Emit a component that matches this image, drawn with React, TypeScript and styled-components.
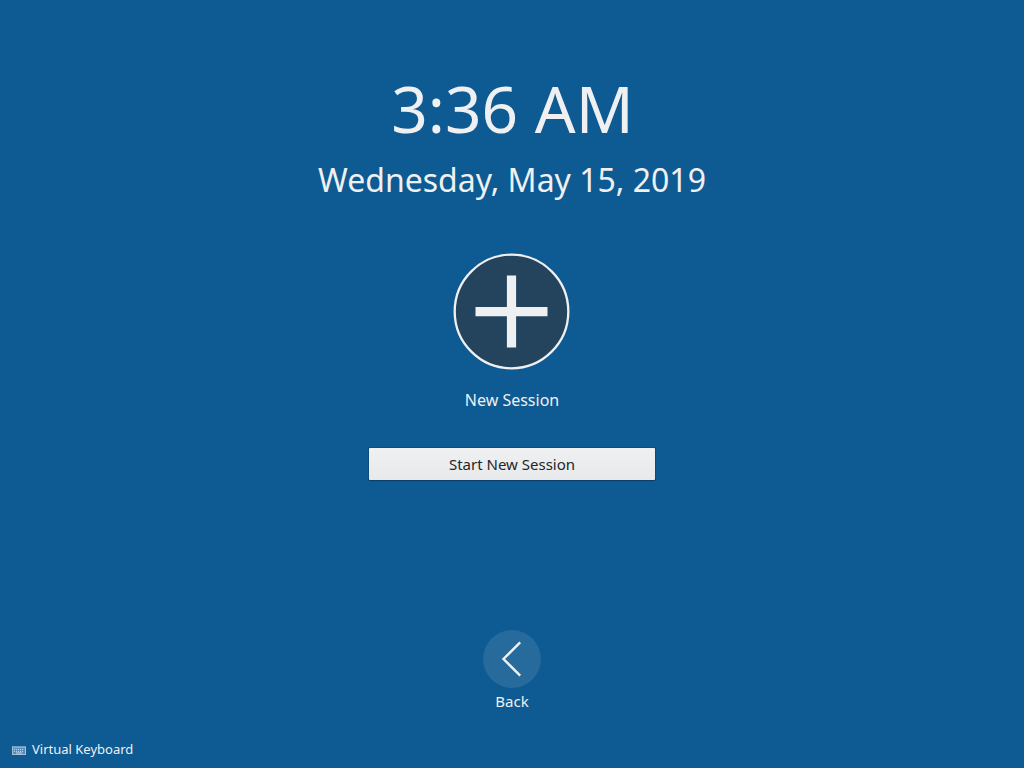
import React from "react";
import styled, { createGlobalStyle } from "styled-components";

const Global = createGlobalStyle`
  html, body { margin: 0; height: 100%; background: #0e5a93; overflow: hidden; }
  * { box-sizing: border-box; }
`;
const Screen = styled.main`
  width: 1024px; height: 768px; display: flex; flex-direction: column; align-items: center;
  background: #0e5a93; color: #eff0f1; font-family: "Noto Sans", sans-serif;
`;
const Clock = styled.header`
  display: flex; flex-direction: column; align-items: center; padding-top: 65px; white-space: nowrap;
`;
const Time = styled.div`font-size: 64px; line-height: 88px; height: 88px; padding-left: 1px;`;
const DateLine = styled.div`font-size: 32px; line-height: 44px; margin-top: 5px;`;
const Session = styled.section`
  display: flex; flex-direction: column; align-items: center; margin-top: 51px;
`;
const Avatar = styled.svg`display: block; width: 118px; height: 118px;`;
const SessionName = styled.div`font-size: 16px; line-height: 22px; margin-top: 18px;`;
const StartButton = styled.button`
  width: 286px; height: 32px; margin-top: 37px; padding: 0; border: 0; border-radius: 1px;
  background: linear-gradient(#eff0f1, #e8e9ea); color: #232629;
  font: 15px/32px "Noto Sans", sans-serif;
  box-shadow: 0 0 0 1px rgba(10, 50, 85, .3), 0 1px 1px rgba(0, 0, 0, .25);
`;
const BackButton = styled.button`
  display: flex; flex-direction: column; align-items: center; margin-top: 150px; padding: 0;
  border: 0; background: none; color: inherit; font: 15px/20px "Noto Sans", sans-serif; gap: 3px;
`;
const BackIcon = styled.svg`display: block; width: 58px; height: 58px;`;
const Footer = styled.footer`
  align-self: stretch; margin-top: auto; padding: 0 0 9px 12px; display: flex; align-items: center;
  gap: 6px; font-size: 13px; line-height: 20px;
`;
const KeyboardIcon = styled.svg`display: block; width: 14px; height: 14px;`;

export default function App() {
  return (
    <Screen>
      <Global />
      <Clock>
        <Time>3:36 AM</Time>
        <DateLine>Wednesday, May 15, 2019</DateLine>
      </Clock>
      <Session>
        <Avatar viewBox="0 0 118 118">
          <circle cx="58.5" cy="58.5" r="56.8" fill="#24445e" stroke="#eff0f1" strokeWidth="2.3" />
          <path d="M22.5 58.6H94.5M58.5 22.5V94.5" stroke="#eff0f1" strokeWidth="9.2" />
        </Avatar>
        <SessionName>New Session</SessionName>
        <StartButton>Start New Session</StartButton>
      </Session>
      <BackButton>
        <BackIcon viewBox="0 0 58 58">
          <circle cx="29" cy="29" r="29" fill="#276a9c" />
          <path d="M37.2 12.3L20.5 29L37.2 45.7" fill="none" stroke="#eff0f1" strokeWidth="2.4" />
        </BackIcon>
        Back
      </BackButton>
      <Footer>
        <KeyboardIcon viewBox="0 0 14 14">
          <path d="M0 4.5H14V13H0Z" fill="#5b8db6" />
          <path d="M0 5H14" stroke="#b9cddd" />
          <path d="M.5 5V13M13.5 5V13M0 12.5H14" stroke="#a5c0d6" />
          <path d="M2 7.5H12M2 9.5H12" stroke="#c6d6e3" strokeDasharray="1 1" />
          <path d="M4 11H10" stroke="#c6d6e3" />
        </KeyboardIcon>
        Virtual Keyboard
      </Footer>
    </Screen>
  );
}
